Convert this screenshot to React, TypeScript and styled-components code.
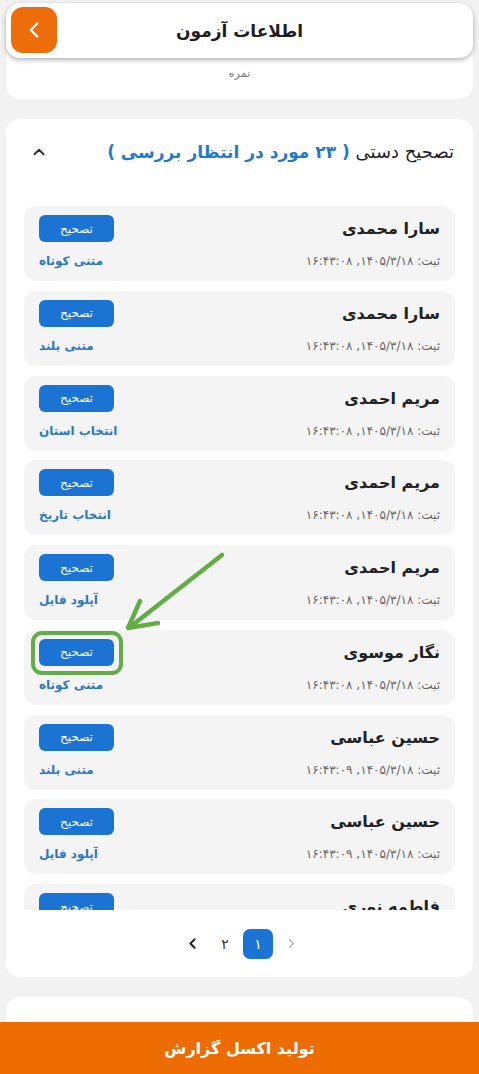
import styled, { createGlobalStyle } from "styled-components"
import { ChevronLeft, ChevronRight, ChevronUp } from "lucide-react"

const GlobalStyle = createGlobalStyle`
	html, body {
		margin: 0;
		padding: 0;
		background: #f2f2f2;
		font-family: "DejaVu Sans", sans-serif;
	}
	* {
		box-sizing: border-box;
	}
`

interface Submission {
	name: string
	time: string
	kind: string
}

const submissions: Submission[] = [
	{ name: "سارا محمدی", time: "۱۴۰۵/۳/۱۸, ۱۶:۴۳:۰۸", kind: "متنی کوتاه" },
	{ name: "سارا محمدی", time: "۱۴۰۵/۳/۱۸, ۱۶:۴۳:۰۸", kind: "متنی بلند" },
	{ name: "مریم احمدی", time: "۱۴۰۵/۳/۱۸, ۱۶:۴۳:۰۸", kind: "انتخاب استان" },
	{ name: "مریم احمدی", time: "۱۴۰۵/۳/۱۸, ۱۶:۴۳:۰۸", kind: "انتخاب تاریخ" },
	{ name: "مریم احمدی", time: "۱۴۰۵/۳/۱۸, ۱۶:۴۳:۰۸", kind: "آپلود فایل" },
	{ name: "نگار موسوی", time: "۱۴۰۵/۳/۱۸, ۱۶:۴۳:۰۸", kind: "متنی کوتاه" },
	{ name: "حسین عباسی", time: "۱۴۰۵/۳/۱۸, ۱۶:۴۳:۰۹", kind: "متنی بلند" },
	{ name: "حسین عباسی", time: "۱۴۰۵/۳/۱۸, ۱۶:۴۳:۰۹", kind: "آپلود فایل" },
	{ name: "فاطمه نوری", time: "۱۴۰۵/۳/۱۸, ۱۶:۴۳:۱۰", kind: "متنی کوتاه" },
]

export default function App() {
	return (
		<>
			<GlobalStyle />
			<Page>
				<Header>
					<BackButton>
						<ChevronLeft size={26} strokeWidth={2.2} color="#fff" />
					</BackButton>
					<HeaderTitle>اطلاعات آزمون</HeaderTitle>
				</Header>

				<ScoreCard>
					<ScoreLabel>نمره</ScoreLabel>
				</ScoreCard>

				<Card>
					<CardHeader>
						<CardTitle>
							تصحیح دستی <Pending>( ۲۳ مورد در انتظار بررسی )</Pending>
						</CardTitle>
						<ChevronUp size={18} strokeWidth={2.6} color="#333" />
					</CardHeader>

					<List>
						{submissions.map((s, i) => (
							<Row key={i}>
								<RowLine>
									<Name>{s.name}</Name>
									<GradeButton>تصحیح</GradeButton>
								</RowLine>
								<RowLine>
									<Time>ثبت: {s.time}</Time>
									<Kind>{s.kind}</Kind>
								</RowLine>
							</Row>
						))}
					</List>

					<Pager>
						<PageArrow $disabled>
							<ChevronRight size={15} strokeWidth={2} />
						</PageArrow>
						<PageNum $active>۱</PageNum>
						<PageNum>۲</PageNum>
						<PageArrow>
							<ChevronLeft size={17} strokeWidth={2.8} />
						</PageArrow>
					</Pager>
				</Card>

				<Card>
					<Spacer />
				</Card>

				<Footer>تولید اکسل گزارش</Footer>

				<Marker viewBox="0 0 479 1074" width={479} height={1074}>
					<line x1="222" y1="555" x2="130" y2="627" stroke="#62ad46" strokeWidth="4.5" strokeLinecap="round" />
					<polyline
						points="140,601 128,628 158,623"
						fill="none"
						stroke="#62ad46"
						strokeWidth="4.5"
						strokeLinecap="round"
						strokeLinejoin="round"
					/>
					<rect x="33" y="633" width="88" height="40" rx="9" fill="none" stroke="#62ad46" strokeWidth="4" />
				</Marker>
			</Page>
		</>
	)
}

const Page = styled.div`
	position: relative;
	direction: rtl;
	width: 479px;
	height: 1074px;
	overflow: hidden;
	padding: 3px 6px 0;
	background: #f2f2f2;
`

const Header = styled.div`
	position: relative;
	z-index: 2;
	height: 55px;
	display: flex;
	align-items: center;
	justify-content: center;
	background: #fff;
	border-radius: 14px;
	box-shadow: 0 2px 5px rgba(0, 0, 0, 0.3);
`

const BackButton = styled.div`
	position: absolute;
	left: 5px;
	top: 4px;
	width: 46px;
	height: 46px;
	border-radius: 12px;
	background: #ee6d0b;
	display: flex;
	align-items: center;
	justify-content: center;
`

const HeaderTitle = styled.div`
	font-size: 17px;
	font-weight: bold;
	color: #1e1e1e;
`

const ScoreCard = styled.div`
	margin-top: -20px;
	padding: 29px 0 19px;
	background: #fff;
	border-radius: 0 0 14px 14px;
	text-align: center;
`

const ScoreLabel = styled.div`
	font-size: 11px;
	color: #777;
`

const Card = styled.div`
	margin-top: 20px;
	background: #fff;
	border-radius: 14px;
	padding: 0 18px;
`

const CardHeader = styled.div`
	height: 87px;
	display: flex;
	align-items: center;
	justify-content: space-between;
	padding: 0 1px 22px 6px;
`

const CardTitle = styled.div`
	font-size: 18px;
	color: #1f1f1f;
`

const Pending = styled.span`
	color: #1f78d1;
	font-weight: bold;
	font-size: 17px;
`

const List = styled.div`
	height: 704px;
	overflow: hidden;
	display: flex;
	flex-direction: column;
	gap: 9.75px;
`

const Row = styled.div`
	flex: 0 0 75px;
	display: flex;
	flex-direction: column;
	justify-content: space-between;
	padding: 9px 15px 10px;
	background: #f4f4f4;
	border-radius: 12px;
`

const RowLine = styled.div`
	display: flex;
	align-items: center;
	justify-content: space-between;
	white-space: nowrap;
`

const Name = styled.div`
	font-size: 16px;
	font-weight: bold;
	color: #222;
`

const GradeButton = styled.div`
	width: 75px;
	height: 27px;
	border-radius: 6px;
	background: #1b74d3;
	color: #fff;
	font-size: 12px;
	display: flex;
	align-items: center;
	justify-content: center;
`

const Time = styled.div`
	font-size: 12px;
	line-height: 20px;
	color: #666;
`

const Kind = styled.div`
	font-size: 12px;
	line-height: 20px;
	font-weight: bold;
	color: #2a77c9;
`

const Pager = styled.div`
	height: 67px;
	display: flex;
	align-items: center;
	justify-content: center;
	gap: 3px;
	padding-left: 4px;
`

const PageNum = styled.div<{ $active?: boolean }>`
	width: 30px;
	height: 30px;
	border-radius: 7px;
	display: flex;
	align-items: center;
	justify-content: center;
	font-size: 14px;
	background: ${(p) => (p.$active ? "#1b74d3" : "transparent")};
	color: ${(p) => (p.$active ? "#fff" : "#333")};
`

const PageArrow = styled.div<{ $disabled?: boolean }>`
	width: 30px;
	height: 30px;
	display: flex;
	align-items: center;
	justify-content: center;
	color: ${(p) => (p.$disabled ? "#b0b0b0" : "#222")};
`

const Spacer = styled.div`
	height: 80px;
`

const Footer = styled.div`
	position: absolute;
	left: 0;
	right: 0;
	bottom: 0;
	z-index: 3;
	height: 52px;
	background: #ec6c02;
	color: #fff;
	font-size: 16px;
	font-weight: bold;
	display: flex;
	align-items: center;
	justify-content: center;
`

const Marker = styled.svg`
	position: absolute;
	left: 0;
	top: 0;
	z-index: 4;
	pointer-events: none;
`
